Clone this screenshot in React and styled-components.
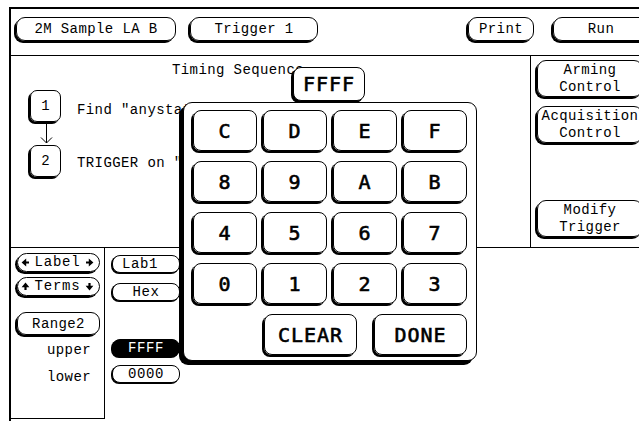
import styled, { createGlobalStyle } from "styled-components";

const GlobalStyle = createGlobalStyle`
  html, body {
    margin: 0;
    padding: 0;
    background: #fff;
    overflow: hidden;
  }
  body {
    font-family: "Liberation Mono", "DejaVu Sans Mono", monospace;
    font-size: 14px;
    color: #000;
  }
`;

const ROT = { left: 180, right: 0, up: -90, down: 90 };

const Arrow = ({ dir }) => (
  <ArrowSvg viewBox="0 0 9 9" $rot={ROT[dir]}>
    <path d="M1 3.4h2.8V0.6L8.4 4.5 3.8 8.4V5.6H1z" fill="#000" />
  </ArrowSvg>
);

const KEYS = ["C", "D", "E", "F", "8", "9", "A", "B", "4", "5", "6", "7", "0", "1", "2", "3"];

const App = () => {
  return (
    <>
      <GlobalStyle />
      <Screen>
        <Header>
          <MenuButton $w={160}>2M Sample LA B</MenuButton>
          <MenuButton $w={128} $ml={14}>
            Trigger 1
          </MenuButton>
          <Spacer />
          <MenuButton $w={66}>Print</MenuButton>
          <MenuButton $w={96} $ml={19} $mr={-8}>
            Run
          </MenuButton>
        </Header>

        <Main>
          <SeqArea>
            <Title>Timing Sequence</Title>
            <Step $mt={12}>
              <StepBox>1</StepBox>
              <StepText $top={12}>Find "anystate" 1 time</StepText>
            </Step>
            <Connector>
              <svg width="31" height="23" viewBox="0 0 31 23">
                <path d="M16.5 1v20M11 15.5l5.5 5.5 5.5-5.5" stroke="#000" strokeWidth="1" fill="none" />
              </svg>
            </Connector>
            <Step>
              <StepBox>2</StepBox>
              <StepText $top={10}>TRIGGER on "a" 1 time</StepText>
            </Step>
          </SeqArea>

          <SideCol>
            <SideButton>
              Arming
              <br />
              Control
            </SideButton>
            <SideButton>
              Acquisition
              <br />
              Control
            </SideButton>
            <SideButton $pushDown>
              Modify
              <br />
              Trigger
            </SideButton>
          </SideCol>
        </Main>

        <Bottom>
          <LeftPanel>
            <PillButton>
              <Arrow dir="left" />
              <span>Label</span>
              <Arrow dir="right" />
            </PillButton>
            <PillButton $mt={5}>
              <Arrow dir="up" />
              <span>Terms</span>
              <Arrow dir="down" />
            </PillButton>
            <RangeButton>Range2</RangeButton>
            <RangeLabel $mt={7}>upper</RangeLabel>
            <RangeLabel $mt={11}>lower</RangeLabel>
          </LeftPanel>

          <FieldCol>
            <Field $left>Lab1</Field>
            <Field $mt={10}>Hex</Field>
            <Field $mt={38} $active>
              FFFF
            </Field>
            <Field $mt={8}>0000</Field>
          </FieldCol>
        </Bottom>

        <Keypad>
          <ValueTab>FFFF</ValueTab>
          <KeyGrid>
            {KEYS.map((k) => (
              <Key key={k}>{k}</Key>
            ))}
          </KeyGrid>
          <LastRow>
            <Key $w={93}>CLEAR</Key>
            <Key $w={93}>DONE</Key>
          </LastRow>
        </Keypad>
      </Screen>
    </>
  );
};

export default App;

const Screen = styled.div`
  position: relative;
  margin: 7px 0 0 9px;
  width: 630px;
  height: 414px;
  border-top: 2px solid #000;
  border-left: 2px solid #000;
  overflow: hidden;
  display: flex;
  flex-direction: column;
`;

const Header = styled.div`
  box-sizing: border-box;
  height: 47px;
  border-bottom: 1px solid #000;
  padding: 8px 0 0 5px;
  display: flex;
  align-items: flex-start;
  flex-shrink: 0;
`;

const Spacer = styled.div`
  flex: 1;
`;

const MenuButton = styled.div`
  box-sizing: border-box;
  flex-shrink: 0;
  width: ${(p) => p.$w}px;
  height: 24px;
  margin-left: ${(p) => p.$ml || 0}px;
  margin-right: ${(p) => p.$mr || 0}px;
  border: 1px solid #000;
  border-radius: 9px;
  box-shadow: -2px 2px 0 #000;
  display: flex;
  align-items: center;
  justify-content: center;
  letter-spacing: 0.4px;
  white-space: nowrap;
`;

const Main = styled.div`
  box-sizing: border-box;
  height: 192px;
  border-bottom: 1px solid #000;
  display: flex;
  flex-shrink: 0;
`;

const SeqArea = styled.div`
  flex: 1;
  padding: 6px 0 0 19px;
  display: flex;
  flex-direction: column;
`;

const Title = styled.div`
  margin-left: 142px;
  line-height: 16px;
  letter-spacing: 0.4px;
  white-space: nowrap;
`;

const Step = styled.div`
  display: flex;
  align-items: flex-start;
  margin-top: ${(p) => p.$mt || 0}px;
`;

const StepBox = styled.div`
  box-sizing: border-box;
  width: 31px;
  height: 32px;
  border: 1px solid #000;
  border-radius: 7px;
  box-shadow: -2px 2px 0 #000;
  display: flex;
  align-items: center;
  justify-content: center;
  flex-shrink: 0;
`;

const StepText = styled.span`
  margin: ${(p) => p.$top}px 0 0 16px;
  line-height: 16px;
  letter-spacing: 0.4px;
  white-space: nowrap;
`;

const Connector = styled.div`
  width: 31px;
  height: 23px;
  svg {
    display: block;
  }
`;

const SideCol = styled.div`
  box-sizing: border-box;
  width: 111px;
  border-left: 1px solid #000;
  padding: 4px 0 10px 6px;
  display: flex;
  flex-direction: column;
  gap: 9px;
`;

const SideButton = styled.div`
  box-sizing: border-box;
  width: 106px;
  height: 37px;
  flex-shrink: 0;
  margin-top: ${(p) => (p.$pushDown ? "auto" : "0")};
  border: 1px solid #000;
  border-radius: 9px;
  box-shadow: -2px 2px 0 #000;
  display: flex;
  align-items: center;
  justify-content: center;
  text-align: center;
  line-height: 17px;
  letter-spacing: 0.4px;
  white-space: nowrap;
`;

const Bottom = styled.div`
  flex: 1;
  display: flex;
  align-items: flex-start;
`;

const LeftPanel = styled.div`
  box-sizing: border-box;
  width: 94px;
  height: 171px;
  border-right: 1px solid #000;
  border-bottom: 1px solid #000;
  padding: 5px 0 0 6px;
  display: flex;
  flex-direction: column;
  flex-shrink: 0;
`;

const PillButton = styled.div`
  box-sizing: border-box;
  width: 83px;
  height: 19px;
  margin-top: ${(p) => p.$mt || 0}px;
  border: 1px solid #000;
  border-radius: 10px;
  box-shadow: -2px 2px 0 #000;
  padding: 0 5px 0 3px;
  display: flex;
  align-items: center;
  justify-content: space-between;
  letter-spacing: 0.8px;
  line-height: 17px;
`;

const ArrowSvg = styled.svg`
  width: 9px;
  height: 9px;
  flex-shrink: 0;
  transform: rotate(${(p) => p.$rot}deg);
`;

const RangeButton = styled.div`
  box-sizing: border-box;
  width: 83px;
  height: 23px;
  margin-top: 16px;
  border: 1px solid #000;
  border-radius: 9px;
  box-shadow: -2px 2px 0 #000;
  display: flex;
  align-items: center;
  justify-content: center;
  letter-spacing: 0.4px;
`;

const RangeLabel = styled.div`
  margin: ${(p) => p.$mt || 0}px 0 0 30px;
  line-height: 16px;
  letter-spacing: 0.4px;
`;

const FieldCol = styled.div`
  padding: 7px 0 0 7px;
  display: flex;
  flex-direction: column;
`;

const Field = styled.div`
  box-sizing: border-box;
  width: 68px;
  height: 18px;
  margin-top: ${(p) => p.$mt || 0}px;
  border: 1px solid #000;
  border-radius: 8px;
  box-shadow: -1px 1px 0 #000;
  background: ${(p) => (p.$active ? "#000" : "#fff")};
  color: ${(p) => (p.$active ? "#fff" : "#000")};
  padding-left: ${(p) => (p.$left ? "9px" : "0")};
  display: flex;
  align-items: center;
  justify-content: ${(p) => (p.$left ? "flex-start" : "center")};
  letter-spacing: 0.6px;
  line-height: 16px;
`;

const Keypad = styled.div`
  position: absolute;
  left: 172px;
  top: 93px;
  z-index: 2;
  box-sizing: border-box;
  width: 294px;
  height: 259px;
  padding: 7px 9px 0 9px;
  background: #fff;
  border: 1px solid #000;
  border-radius: 9px;
  box-shadow: -4px 4px 0 #000;
`;

const ValueTab = styled.div`
  position: absolute;
  left: 109px;
  top: -36px;
  box-sizing: border-box;
  width: 72px;
  height: 34px;
  background: #fff;
  border: 1px solid #000;
  border-radius: 8px;
  box-shadow: -2px 2px 0 #000;
  display: flex;
  align-items: center;
  justify-content: center;
  font-family: "DejaVu Sans Mono", "Liberation Mono", monospace;
  font-size: 20px;
  -webkit-text-stroke: 0.6px #000;
  letter-spacing: 1px;
`;

const KeyGrid = styled.div`
  display: grid;
  grid-template-columns: repeat(4, 64px);
  grid-auto-rows: 41px;
  column-gap: 6px;
  row-gap: 10px;
`;

const LastRow = styled.div`
  margin-top: 10px;
  display: flex;
  justify-content: flex-end;
  gap: 17px;
`;

const Key = styled.div`
  box-sizing: border-box;
  width: ${(p) => (p.$w ? `${p.$w}px` : "auto")};
  height: 41px;
  border: 1px solid #000;
  border-radius: 8px;
  box-shadow: -2px 2px 0 #000;
  display: flex;
  align-items: center;
  justify-content: center;
  font-family: "DejaVu Sans Mono", "Liberation Mono", monospace;
  font-size: 20px;
  -webkit-text-stroke: 0.6px #000;
  letter-spacing: 1px;
`;
